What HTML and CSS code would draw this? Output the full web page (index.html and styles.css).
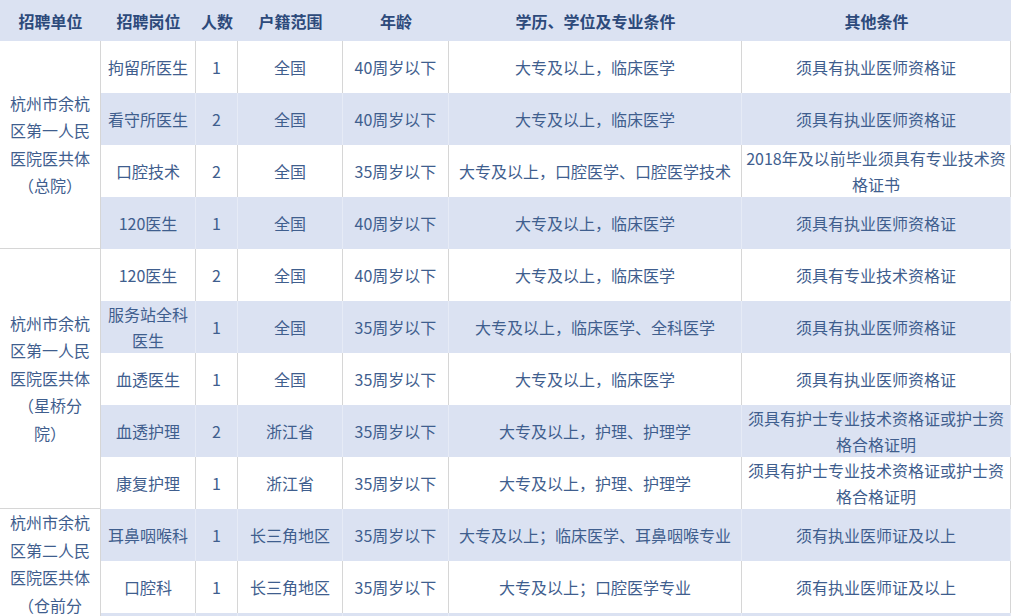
FILE: index.html
```html
<!DOCTYPE html>
<html lang="zh-CN">
<head>
<meta charset="utf-8">
<title>招聘岗位表</title>
<link rel="stylesheet" href="styles.css">
</head>
<body>
<table class="jobs">
  <colgroup>
    <col class="c-unit">
    <col class="c-post">
    <col class="c-num">
    <col class="c-area">
    <col class="c-age">
    <col class="c-edu">
    <col class="c-other">
  </colgroup>
  <thead>
    <tr>
      <th>招聘单位</th>
      <th>招聘岗位</th>
      <th>人数</th>
      <th>户籍范围</th>
      <th>年龄</th>
      <th>学历、学位及专业条件</th>
      <th>其他条件</th>
    </tr>
  </thead>
  <tbody>
    <tr>
      <td class="unit" rowspan="4">杭州市余杭区第一人民医院医共体（总院）</td>
      <td>拘留所医生</td><td>1</td><td>全国</td><td>40周岁以下</td><td>大专及以上，临床医学</td><td>须具有执业医师资格证</td>
    </tr>
    <tr class="alt">
      <td>看守所医生</td><td>2</td><td>全国</td><td>40周岁以下</td><td>大专及以上，临床医学</td><td>须具有执业医师资格证</td>
    </tr>
    <tr>
      <td>口腔技术</td><td>2</td><td>全国</td><td>35周岁以下</td><td>大专及以上，口腔医学、口腔医学技术</td><td>2018年及以前毕业须具有专业技术资格证书</td>
    </tr>
    <tr class="alt">
      <td>120医生</td><td>1</td><td>全国</td><td>40周岁以下</td><td>大专及以上，临床医学</td><td>须具有执业医师资格证</td>
    </tr>
    <tr>
      <td class="unit" rowspan="5">杭州市余杭区第一人民医院医共体（星桥分院）</td>
      <td>120医生</td><td>2</td><td>全国</td><td>40周岁以下</td><td>大专及以上，临床医学</td><td>须具有专业技术资格证</td>
    </tr>
    <tr class="alt">
      <td>服务站全科医生</td><td>1</td><td>全国</td><td>35周岁以下</td><td>大专及以上，临床医学、全科医学</td><td>须具有执业医师资格证</td>
    </tr>
    <tr>
      <td>血透医生</td><td>1</td><td>全国</td><td>35周岁以下</td><td>大专及以上，临床医学</td><td>须具有执业医师资格证</td>
    </tr>
    <tr class="alt">
      <td>血透护理</td><td>2</td><td>浙江省</td><td>35周岁以下</td><td>大专及以上，护理、护理学</td><td>须具有护士专业技术资格证或护士资格合格证明</td>
    </tr>
    <tr>
      <td>康复护理</td><td>1</td><td>浙江省</td><td>35周岁以下</td><td>大专及以上，护理、护理学</td><td>须具有护士专业技术资格证或护士资格合格证明</td>
    </tr>
    <tr class="alt">
      <td class="unit unit-top" rowspan="3">杭州市余杭区第二人民医院医共体（仓前分院）</td>
      <td>耳鼻咽喉科</td><td>1</td><td>长三角地区</td><td>35周岁以下</td><td>大专及以上；临床医学、耳鼻咽喉专业</td><td>须有执业医师证及以上</td>
    </tr>
    <tr>
      <td>口腔科</td><td>1</td><td>长三角地区</td><td>35周岁以下</td><td>大专及以上；口腔医学专业</td><td>须有执业医师证及以上</td>
    </tr>
    <tr class="alt">
      <td></td><td></td><td></td><td></td><td></td><td></td>
    </tr>
  </tbody>
</table>
</body>
</html>
```

FILE: styles.css
```css
html, body {
  margin: 0;
  padding: 0;
  background: #ffffff;
}

body {
  font-family: "Noto Sans CJK SC", "Noto Sans", sans-serif;
  font-size: 16px;
  color: #3f5e8e;
  overflow: hidden;
}

.jobs {
  width: 1011px;
  table-layout: fixed;
  border-collapse: separate;
  border-spacing: 0;
}

.c-unit { width: 101px; }
.c-post { width: 95px; }
.c-num { width: 42px; }
.c-area { width: 105px; }
.c-age { width: 106px; }
.c-edu { width: 293px; }
.c-other { width: 269px; }

.jobs th {
  height: 41px;
  padding: 0 4px;
  background: #dbe2f2;
  color: #2d4a7b;
  font-weight: bold;
  text-align: center;
  vertical-align: middle;
  line-height: 26px;
  box-sizing: border-box;
}

.jobs tbody tr {
  height: 52px;
}

.jobs td {
  padding: 0 4px;
  text-align: center;
  vertical-align: middle;
  line-height: 26px;
  background: #ffffff;
  border-right: 1px solid #d6d6d6;
  box-sizing: border-box;
}

.jobs tr.alt td {
  background: #dbe2f2;
  border-right-color: #e6ebf6;
}

.jobs td.unit,
.jobs tr.alt td.unit {
  padding: 0 8px;
  background: #ffffff;
  border-right: 1px solid #d6d6d6;
  border-bottom: 1px solid #d6d6d6;
  line-height: 27.5px;
}

.jobs td.unit-top,
.jobs tr.alt td.unit-top {
  vertical-align: top;
}
```
